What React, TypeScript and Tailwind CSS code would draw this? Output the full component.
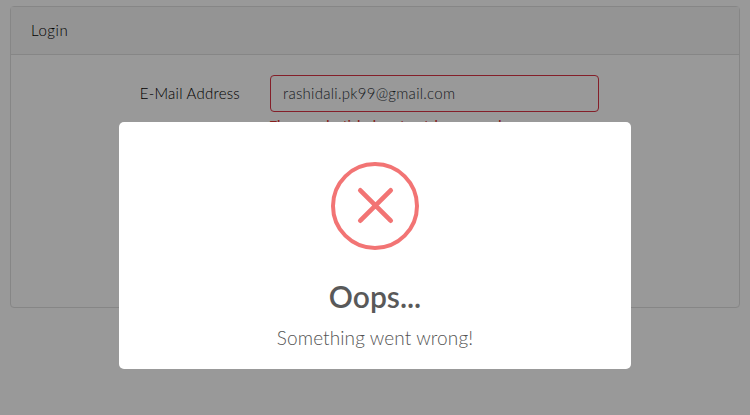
function ErrorIcon() {
  return (
    <svg className="h-[88px] w-[88px] shrink-0" viewBox="0 0 88 88" fill="none" stroke="#f27474">
      <circle cx="44" cy="44" r="42" strokeWidth="4" />
      <path d="M29.3 28.3L59.7 58.7M59.7 28.3L29.3 58.7" strokeWidth="4.7" strokeLinecap="round" />
    </svg>
  );
}

function LoginCard() {
  return (
    <section className="h-[302px] rounded border border-[#dfdfdf] bg-white">
      <header className="flex h-12 items-center border-b border-[#dfdfdf] bg-[#f7f7f7] px-5">
        <span className="text-[15px] font-light tracking-[0.55px] text-black">Login</span>
      </header>
      <div className="flex pt-5">
        <label className="w-[229px] pt-[7px] text-right text-[15px] font-light leading-[23px] tracking-[0.25px] text-black">
          E-Mail Address
        </label>
        <div className="ml-[30px] w-[329px]">
          <div className="flex h-[37px] items-center rounded border border-[#dc3545] px-3 text-[15px] font-light tracking-[0.27px] text-[#2b3137]">
            rashidali.pk99@gmail.com
          </div>
          <p className="mt-1 whitespace-nowrap text-[11.5px] font-bold leading-[18px] tracking-[0.4px] text-[#e3342f]">
            These credentials do not match our records.
          </p>
        </div>
      </div>
    </section>
  );
}

export default function App() {
  return (
    <main className="relative h-[415px] w-[750px] overflow-hidden bg-white px-[10px] pt-[6px] font-[Lato,'Open_Sans',sans-serif] text-[#212529]">
      <LoginCard />
      <div className="absolute inset-0 flex justify-center bg-black/40 pt-[122px]">
        <div
          role="dialog"
          className="flex h-[247px] w-[512px] flex-col items-center rounded-[5px] bg-white pt-10"
        >
          <ErrorIcon />
          <h2 className="mt-7 text-[30px] font-semibold leading-9 text-[#595959]">Oops...</h2>
          <p className="mt-3 text-[19px] font-light leading-6 tracking-[0.1px] text-[#545454]">Something went wrong!</p>
        </div>
      </div>
    </main>
  );
}
